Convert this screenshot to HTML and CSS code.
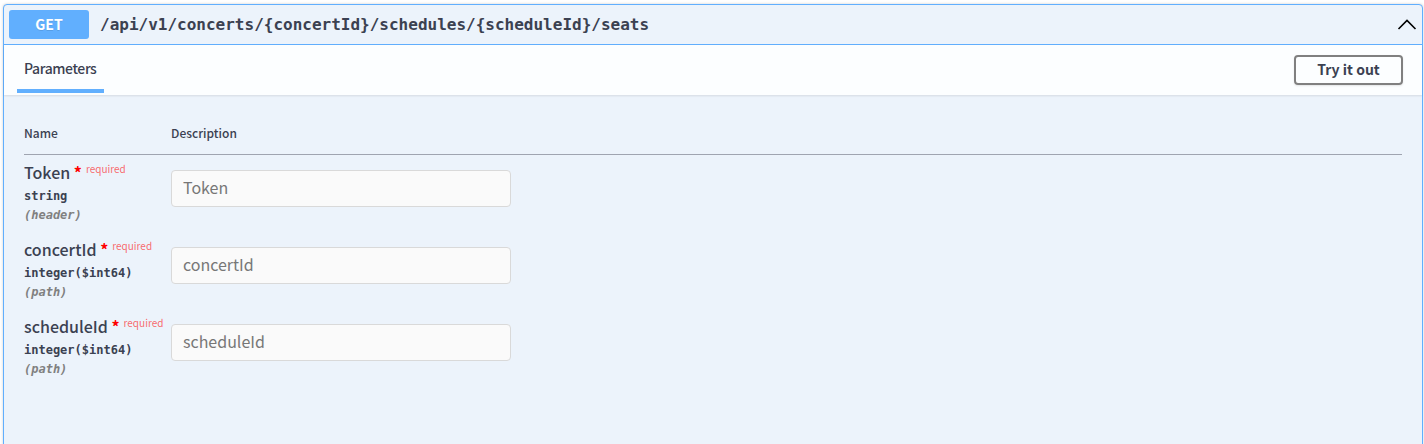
FILE: index.html
```html
<!DOCTYPE html>
<html lang="en">
<head>
<meta charset="utf-8">
<title>GET seats</title>
<link rel="stylesheet" href="styles.css">
</head>
<body>
<div class="opblock">
  <div class="summary">
    <span class="method">GET</span>
    <span class="path">/api/v1/concerts/{concertId}/schedules/{scheduleId}/seats</span>
    <svg class="arrow" width="20" height="20" viewBox="0 0 20 20" aria-hidden="true"><polyline points="1.5,14 10,5.5 18.5,14" fill="none" stroke="#000" stroke-width="1.6"/></svg>
  </div>
  <div class="section-header">
    <div class="tab">Parameters</div>
    <button class="try-out">Try it out</button>
  </div>
  <div class="table-container">
    <table class="parameters">
      <thead>
        <tr><th class="col-name">Name</th><th>Description</th></tr>
      </thead>
      <tbody>
        <tr>
          <td class="col-name">
            <div class="param-name">Token<span class="star">&nbsp;*</span><span class="req">required</span></div>
            <div class="param-type">string</div>
            <div class="param-in">(header)</div>
          </td>
          <td><input class="param-input" type="text" placeholder="Token"></td>
        </tr>
        <tr>
          <td class="col-name">
            <div class="param-name">concertId<span class="star">&nbsp;*</span><span class="req">required</span></div>
            <div class="param-type">integer($int64)</div>
            <div class="param-in">(path)</div>
          </td>
          <td><input class="param-input" type="text" placeholder="concertId"></td>
        </tr>
        <tr>
          <td class="col-name">
            <div class="param-name">scheduleId<span class="star">&nbsp;*</span><span class="req">required</span></div>
            <div class="param-type">integer($int64)</div>
            <div class="param-in">(path)</div>
          </td>
          <td><input class="param-input" type="text" placeholder="scheduleId"></td>
        </tr>
      </tbody>
    </table>
  </div>
</div>
</body>
</html>
```
FILE: styles.css
```css
html, body {
  margin: 0;
  padding: 0;
  background: #ffffff;
}
body {
  font-family: "Noto Sans CJK KR", "Noto Sans", sans-serif;
  color: #3b4151;
  overflow: hidden;
}
.opblock {
  margin: 4px 1px 0 3px;
  min-height: 470px;
  border: 1px solid #61affe;
  border-radius: 4px;
  background: #ecf3fb;
  box-shadow: 0 0 3px rgba(0, 0, 0, 0.19);
}
.summary {
  display: flex;
  align-items: center;
  padding: 5px;
  border-bottom: 1px solid #61affe;
}
.method {
  display: block;
  width: 80px;
  padding: 6px 0;
  line-height: 17px;
  font-size: 14px;
  font-weight: 700;
  text-align: center;
  color: #fff;
  background: #61affe;
  border-radius: 3px;
  text-shadow: 0 1px 0 rgba(0, 0, 0, 0.1);
}
.path {
  flex: 1;
  padding: 0 10px 0 11px;
  font-family: "DejaVu Sans Mono", monospace;
  font-size: 16px;
  font-weight: 600;
  color: #3b4151;
}
.arrow {
  display: block;
  flex: none;
}
.section-header {
  display: flex;
  justify-content: space-between;
  align-items: flex-end;
  height: 50px;
  box-sizing: border-box;
  padding: 0 20px 2px;
  background: rgba(255, 255, 255, 0.85);
  box-shadow: 0 1px 2px rgba(0, 0, 0, 0.1);
}
.tab {
  font-size: 14px;
  font-weight: 500;
  line-height: 19px;
  letter-spacing: -0.4px;
  color: #3b4151;
}
.tab::after {
  content: "";
  display: block;
  width: 120%;
  margin-left: -10%;
  margin-top: 11px;
  height: 4px;
  background: #61affe;
}
.try-out {
  align-self: center;
  width: 109px;
  height: 30px;
  margin-right: -1px;
  margin-top: 1px;
  padding: 0;
  font-family: inherit;
  font-size: 14px;
  font-weight: 700;
  line-height: 19px;
  color: #3b4151;
  background: transparent;
  border: 2px solid #808080;
  border-radius: 4px;
  box-shadow: 0 1px 2px rgba(0, 0, 0, 0.1);
}
.table-container {
  padding: 19px 20px 20px;
}
.parameters {
  width: 100%;
  border-collapse: collapse;
}
.parameters th {
  padding: 11px 0 13px;
  font-size: 12px;
  font-weight: 500;
  line-height: 16px;
  text-align: left;
  color: #3b4151;
  border-bottom: 1px solid rgba(59, 65, 81, 0.25);
}
.col-name {
  width: 147px;
}
.parameters td {
  padding: 9px 0 9px;
  vertical-align: top;
}
.param-name {
  font-size: 16px;
  font-weight: 500;
  line-height: 16px;
  color: #3b4151;
  white-space: nowrap;
}
.star {
  color: #ff0000;
  font-weight: 700;
  line-height: 0;
}
.req {
  font-size: 10px;
  font-weight: 400;
  padding-left: 4px;
  line-height: 0;
  color: rgba(255, 0, 0, 0.6);
  vertical-align: 6px;
}
.param-type {
  margin-top: 8px;
  font-family: "DejaVu Sans Mono", monospace;
  font-size: 12px;
  font-weight: 600;
  line-height: 16px;
  color: #3b4151;
}
.param-in {
  margin-top: 3px;
  font-family: "DejaVu Sans Mono", monospace;
  font-size: 12px;
  font-weight: 600;
  font-style: italic;
  line-height: 16px;
  color: #808080;
}
.param-input {
  display: block;
  box-sizing: border-box;
  width: 340px;
  height: 37px;
  margin: 6px 0 0;
  padding: 6px 11px 9px;
  font-family: "Noto Sans CJK KR", "Noto Sans", sans-serif;
  font-size: 16px;
  font-weight: 400;
  color: #3b4151;
  background: #fafafa;
  border: 1px solid #d9d9d9;
  border-radius: 4px;
  outline: none;
}
.param-input::placeholder {
  color: #777777;
}
```
